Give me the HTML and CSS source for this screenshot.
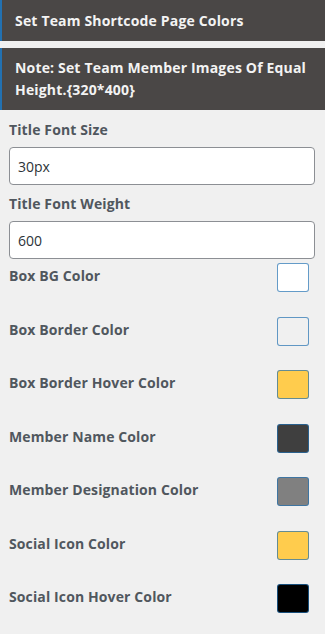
FILE: index.html
```html
<!DOCTYPE html>
<html>
    <head>
        <title>Team Settings</title>
        <meta name="viewport" content="width=device-width, initial-scale=1">
        <link rel="stylesheet" href="styles.css">
    </head>
    <body>
        <div class="bar">Set Team Shortcode Page Colors</div>
        <div class="bar note">Note: Set Team Member Images Of Equal Height.{320*400}</div>
        <div class="form">
            <div class="field">
                <label>Title Font Size</label>
                <input type="text" value="30px">
            </div>
            <div class="field">
                <label>Title Font Weight</label>
                <input type="text" value="600">
            </div>
            <div class="colors">
                <div class="row"><span>Box BG Color</span><div class="swatch c-white"></div></div>
                <div class="row"><span>Box Border Color</span><div class="swatch c-light"></div></div>
                <div class="row"><span>Box Border Hover Color</span><div class="swatch c-yellow"></div></div>
                <div class="row"><span>Member Name Color</span><div class="swatch c-dark"></div></div>
                <div class="row"><span>Member Designation Color</span><div class="swatch c-gray"></div></div>
                <div class="row"><span>Social Icon Color</span><div class="swatch c-yellow"></div></div>
                <div class="row"><span>Social Icon Hover Color</span><div class="swatch c-black"></div></div>
            </div>
        </div>
    </body>
</html>
```

FILE: styles.css
```css
body{
    margin: 0px;
    padding: 0px;
    background: #f0f0f0;
    font-family: "Open Sans", "Noto Sans", sans-serif;
    letter-spacing: 0.12px;
    color: #50575e;
}
.bar{
    background: #4a4746;
    border-left: 2px solid #2271b1;
    color: #f3f3f3;
    font-size: 14px;
    font-weight: bold;
    line-height: 21px;
    letter-spacing: 0.17px;
    padding: 10px 13px;
    height: 21px;
}
.bar.note{
    margin-top: 7px;
    height: auto;
    line-height: 22px;
    padding: 9px 13px 9px 13px;
}
.form{
    padding: 0 10px 0 9px;
}
.field label{
    display: block;
    font-size: 14px;
    font-weight: bold;
    line-height: 20px;
    padding: 10px 0 7px 0;
}
.field + .field label{
    padding-top: 9px;
}
.field input{
    display: block;
    box-sizing: border-box;
    width: 100%;
    height: 38px;
    border: 1px solid #8c8f94;
    border-radius: 4px;
    background: #ffffff;
    padding: 0 8px;
    font-family: inherit;
    font-size: 14px;
    color: #2c3338;
}
.colors{
    padding-top: 4px;
}
.row{
    display: flex;
    justify-content: space-between;
    align-items: center;
    height: 29px;
    margin-bottom: 24.5px;
    font-size: 14px;
    font-weight: bold;
}
.row span{
    margin-top: -4px;
}
.swatch{
    box-sizing: border-box;
    width: 32px;
    height: 29px;
    margin-right: 6px;
    border: 1px solid rgba(34,113,177,0.7);
    border-radius: 3px;
}
.c-white{ background-color: #ffffff;}
.c-light{ background-color: #f0f0f0;}
.c-yellow{ background-color: #ffcc4d;}
.c-dark{ background-color: #3f3f3f;}
.c-gray{ background-color: #808080;}
.c-black{ background-color: #000000;}
```
